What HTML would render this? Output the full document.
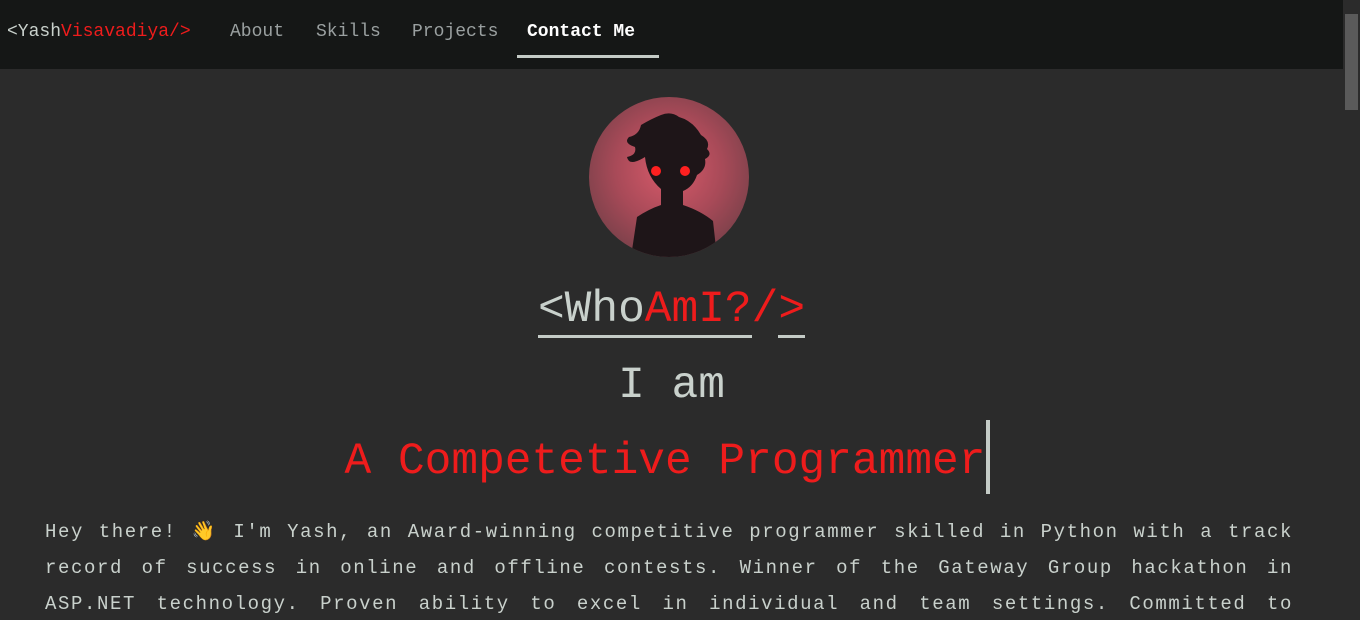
<!DOCTYPE html>
<html><head><meta charset="utf-8"><style>
*{margin:0;padding:0;box-sizing:border-box}
html,body{width:1360px;height:620px;overflow:hidden}
body{background:#2b2b2b;font-family:"Liberation Mono",monospace;color:#c9d1cc;position:relative}
nav{height:69px;background:#151716;position:relative}
nav span{position:absolute;top:20px;font-size:18px;line-height:24px;color:#9aa0a0}
.r{color:#ee1c1c}
.sb{position:absolute;right:0;top:0;width:17px;height:620px;background:#2b2b2b}
.sb div{position:absolute;left:2px;top:14px;width:13px;height:96px;background:#5a5a5a}
.avatar{position:absolute;left:589px;top:97px;width:160px;height:160px;border-radius:50%;background:radial-gradient(circle at 50% 45%,#d85a6a 0%,#a84a58 45%,#5a3a40 100%);overflow:hidden}
h1{position:absolute;left:0;width:1343px;text-align:center;font-weight:normal;font-size:44.5px}
.pw{position:absolute;left:45px;width:1248px;top:514px;height:106px;overflow:hidden}
p{font-size:19px;line-height:36px;letter-spacing:1.6px;text-align:justify}
</style></head><body>
<nav>
<span style="left:7px;color:#c9d1cc">&lt;Yash<span class="r" style="position:static">Visavadiya/&gt;</span></span>
<span style="left:230px">About</span>
<span style="left:316px">Skills</span>
<span style="left:412px">Projects</span>
<span style="left:527px;color:#fff;font-weight:bold">Contact Me</span>
<div style="position:absolute;left:517px;top:55px;width:142px;height:3px;background:#c4cbc6"></div>
</nav>
<div class="avatar">
<svg width="160" height="160" viewBox="0 0 160 160">
<path d="M42 160 L48 120 Q60 112 72 108 L72 92 Q58 80 56 60 Q40 70 38 60 Q48 58 46 50 Q34 46 40 40 Q50 38 52 28 Q62 22 72 18 Q82 14 90 20 Q104 24 112 38 Q122 44 118 52 Q124 58 116 62 Q118 72 108 78 Q104 90 94 94 L94 108 Q112 114 124 124 L128 160 Z" fill="#1e1518"/>
<circle cx="67" cy="74" r="5" fill="#ff2020"/><circle cx="96" cy="74" r="5" fill="#ff2020"/>
</svg></div>
<h1 style="top:284px;line-height:52px"><span style="border-bottom:3px solid #c4cbc6">&lt;Who<span class="r">AmI?</span></span><span class="r">/</span><span style="border-bottom:3px solid #c4cbc6"><span class="r">&gt;</span></span></h1>
<h1 style="top:360px;line-height:52px">I am</h1>
<h1 style="top:424px;line-height:52px;padding-right:8px"><span class="r">A Competetive Programmer</span><span style="position:relative;display:inline-block;width:4px;height:74px;background:#c4cbc6;vertical-align:middle;top:-4px;margin-left:1px"></span></h1>
<div class="pw"><p>Hey there! 👋 I'm Yash, an Award-winning competitive programmer skilled in Python with a track record of success in online and offline contests. Winner of the Gateway Group hackathon in ASP.NET technology. Proven ability to excel in individual and team settings. Committed to continuous learning.</p></div>
<div class="sb"><div></div></div>
</body></html>
